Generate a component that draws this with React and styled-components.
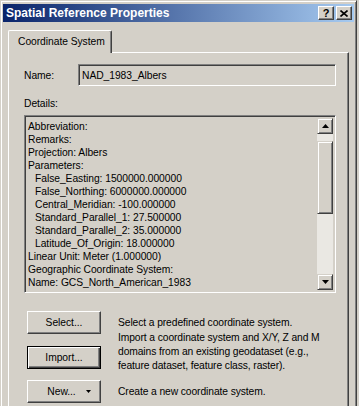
import React from 'react'
import styled, {createGlobalStyle} from 'styled-components'

const FACE = '#d4d0c8'

const GlobalStyle = createGlobalStyle`
  html, body {
    margin: 0;
    padding: 0;
    background: ${FACE};
    overflow: hidden;
  }
  #root {
    height: 406px;
    overflow: hidden;
  }
`

const Window = styled.div`
  box-sizing: border-box;
  width: 357px;
  height: 430px;
  padding: 3px 2px 0 2px;
  background: ${FACE};
  border: 1px solid;
  border-color: ${FACE} #404040 #404040 ${FACE};
  box-shadow: inset 1px 1px #fff, inset -1px -1px #808080;
  font-family: 'Liberation Sans', Arial, sans-serif;
  font-size: 10.3px;
  letter-spacing: -0.05px;
  color: #000;
`

const TitleBar = styled.div`
  display: flex;
  align-items: center;
  height: 18px;
  padding: 0 2px 0 2px;
  background: linear-gradient(to right, #0a246a, #a6caf0);
`

const Title = styled.div`
  flex: 1;
  color: #fff;
  font-weight: bold;
  font-size: 12px;
  letter-spacing: 0;
  padding-left: 1px;
`

const TitleButton = styled.div`
  box-sizing: border-box;
  width: 16px;
  height: 14px;
  margin-left: ${(p) => (p.$gap ? '2px' : '0')};
  display: flex;
  align-items: center;
  justify-content: center;
  background: ${FACE};
  border: 1px solid;
  border-color: #fff #404040 #404040 #fff;
  box-shadow: inset -1px -1px #808080;
  font-weight: bold;
  font-size: 11px;
  line-height: 1;
`

const Body = styled.div`
  padding: 8px 5px 0 5px;
`

const TabStrip = styled.div`
  display: flex;
  position: relative;
  z-index: 1;
`

const Tab = styled.div`
  box-sizing: border-box;
  width: 104px;
  height: 23px;
  margin-bottom: -1px;
  padding: 5px 0 0 9px;
  background: ${FACE};
  border-left: 1px solid #fff;
  border-top: 1px solid #fff;
  border-right: 1px solid #404040;
  border-top-left-radius: 2px;
  border-top-right-radius: 2px;
  box-shadow: inset -1px 0 #808080;
`

const Panel = styled.div`
  box-sizing: border-box;
  height: 400px;
  padding: 11px 12px 0 15px;
  border-top: 1px solid #fff;
  border-left: 1px solid #fff;
  border-right: 1px solid #404040;
  box-shadow: inset -1px 0 #808080;
`

const NameRow = styled.div`
  display: flex;
  align-items: center;
`

const Label = styled.div`
  width: 54px;
  line-height: 13px;
  margin-top: ${(p) => p.$top || 0}px;
  margin-bottom: ${(p) => p.$bottom || 0}px;
`

const Sunken = styled.div`
  box-sizing: border-box;
  border: 1px solid;
  border-color: #808080 #fff #fff #808080;
  box-shadow: inset 1px 1px #404040, inset -1px -1px ${FACE};
  background: ${FACE};
`

const NameField = styled(Sunken)`
  width: 258px;
  height: 22px;
  padding: 0 3px;
  display: flex;
  align-items: center;
`

const DetailsBox = styled(Sunken)`
  width: 312px;
  height: 178px;
  padding: 2px;
  display: flex;
`

const DetailsText = styled.div`
  flex: 1;
  overflow: hidden;
  padding: 2px 0 0 1px;
  line-height: 13px;
  white-space: pre;
`

const Line = styled.div`
  padding-left: ${(p) => (p.$indent ? 7 : 0)}px;
`

const ScrollBar = styled.div`
  width: 16px;
  display: flex;
  flex-direction: column;
`

const ScrollButton = styled.div`
  box-sizing: border-box;
  width: 16px;
  height: 16px;
  display: flex;
  align-items: center;
  justify-content: center;
  background: ${FACE};
  border: 1px solid;
  border-color: ${FACE} #404040 #404040 ${FACE};
  box-shadow: inset 1px 1px #fff, inset -1px -1px #808080;
`

const Track = styled.div`
  flex: 1;
  background-color: #eae8e3;
  background-image: radial-gradient(#fff 0.5px, transparent 0.6px);
  background-size: 2px 2px;
`

const Thumb = styled(ScrollButton)`
  height: 73px;
  margin-top: 7px;
`

const Actions = styled.div`
  margin-top: 18px;
  padding-left: 3px;
`

const ActionRow = styled.div`
  display: grid;
  grid-template-columns: 74px 1fr;
  column-gap: 17px;
  align-items: center;
  margin-top: ${(p) => p.$top || 0}px;
`

const Button = styled.div`
  box-sizing: border-box;
  width: 74px;
  height: 23px;
  margin-top: ${(p) => p.$offset || 0}px;
  display: flex;
  align-items: center;
  justify-content: center;
  gap: 10px;
  background: ${FACE};
  border: 1px solid;
  border-color: ${(p) => (p.$default ? '#000' : '#fff #404040 #404040 #fff')};
  box-shadow: ${(p) =>
    p.$default
      ? 'inset 1px 1px #fff, inset -1px -1px #404040, inset -2px -2px #808080'
      : 'inset -1px -1px #808080'};
  padding-left: ${(p) => (p.$menu ? '10px' : '0')};
`

const Description = styled.div`
  line-height: 14px;
  letter-spacing: -0.1px;
`

const Arrow = ({down}) => (
  <svg width="7" height="4" viewBox="0 0 7 4">
    <path d={down ? 'M0 0h7L3.5 4z' : 'M3.5 0L7 4H0z'} fill="#000" />
  </svg>
)

const details = [
  ['Abbreviation:'],
  ['Remarks:'],
  ['Projection: Albers'],
  ['Parameters:'],
  ['False_Easting: 1500000.000000', true],
  ['False_Northing: 6000000.000000', true],
  ['Central_Meridian: -100.000000', true],
  ['Standard_Parallel_1: 27.500000', true],
  ['Standard_Parallel_2: 35.000000', true],
  ['Latitude_Of_Origin: 18.000000', true],
  ['Linear Unit: Meter (1.000000)'],
  ['Geographic Coordinate System:'],
  ['Name: GCS_North_American_1983'],
]

export default function App() {
  return (
    <>
      <GlobalStyle />
      <Window>
        <TitleBar>
          <Title>Spatial Reference Properties</Title>
          <TitleButton>?</TitleButton>
          <TitleButton $gap>
            <svg width="8" height="7" viewBox="0 0 8 7">
              <path d="M0.5 0.5L7.5 6.5M7.5 0.5L0.5 6.5" stroke="#000" strokeWidth="1.6" />
            </svg>
          </TitleButton>
        </TitleBar>
        <Body>
          <TabStrip>
            <Tab>Coordinate System</Tab>
          </TabStrip>
          <Panel>
            <NameRow>
              <Label>Name:</Label>
              <NameField>NAD_1983_Albers</NameField>
            </NameRow>
            <Label $top={11} $bottom={5}>Details:</Label>
            <DetailsBox>
              <DetailsText>
                {details.map(([text, indent]) => (
                  <Line key={text} $indent={indent}>
                    {text}
                  </Line>
                ))}
              </DetailsText>
              <ScrollBar>
                <ScrollButton>
                  <Arrow />
                </ScrollButton>
                <Track>
                  <Thumb />
                </Track>
                <ScrollButton>
                  <Arrow down />
                </ScrollButton>
              </ScrollBar>
            </DetailsBox>
            <Actions>
              <ActionRow>
                <Button>Select...</Button>
                <Description>Select a predefined coordinate system.</Description>
              </ActionRow>
              <ActionRow $top={-3}>
                <Button $default $offset={11}>
                  Import...
                </Button>
                <Description>
                  Import a coordinate system and X/Y, Z and M
                  <br />
                  domains from an existing geodataset (e.g.,
                  <br />
                  feature dataset, feature class, raster).
                </Description>
              </ActionRow>
              <ActionRow $top={7}>
                <Button $menu>
                  New...
                  <svg width="5" height="3" viewBox="0 0 5 3">
                    <path d="M0 0h5L2.5 3z" fill="#000" />
                  </svg>
                </Button>
                <Description>Create a new coordinate system.</Description>
              </ActionRow>
            </Actions>
          </Panel>
        </Body>
      </Window>
    </>
  )
}
